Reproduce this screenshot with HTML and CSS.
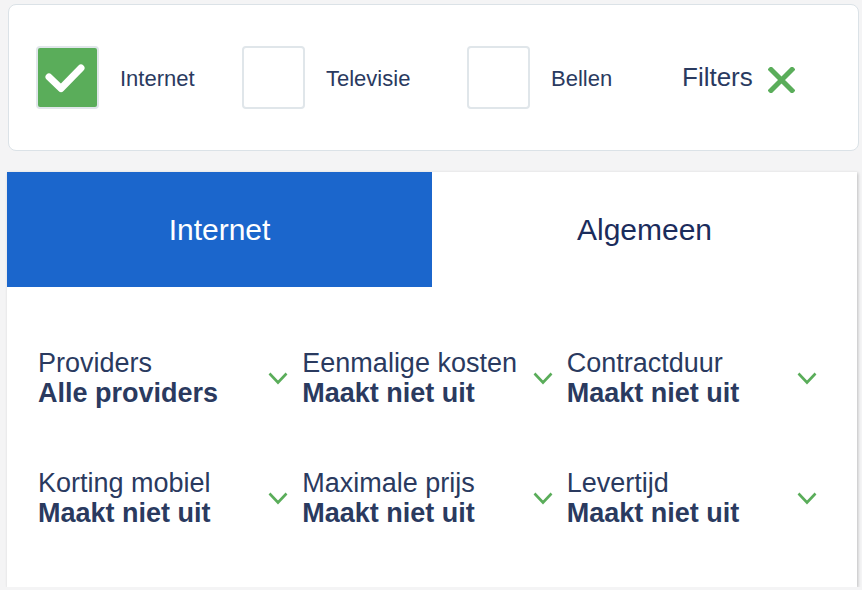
FILE: index.html
```html
<!DOCTYPE html>
<html lang="nl">
<head>
  <meta charset="UTF-8" />
  <meta name="viewport" content="width=device-width, initial-scale=1.0"/>
  <title>Filters</title>
  <link rel="stylesheet" href="styles.css">
</head>
<body>
  <div class="filter-bar">
    <label class="check-item">
      <span class="check-box checked">
        <svg width="63" height="63" viewBox="0 0 63 63"><path d="M13 31 L25 42.5 L45 22" fill="none" stroke="#fff" stroke-width="7" stroke-linecap="round" stroke-linejoin="round"/></svg>
      </span>
      <span class="check-label">Internet</span>
    </label>
    <label class="check-item">
      <span class="check-box"></span>
      <span class="check-label">Televisie</span>
    </label>
    <label class="check-item">
      <span class="check-box"></span>
      <span class="check-label">Bellen</span>
    </label>
    <div class="filters-close">
      <span>Filters</span>
      <svg width="27" height="26" viewBox="0 0 27 26"><path d="M3 2.5 L24 23.5 M24 2.5 L3 23.5" stroke="#5aad5a" stroke-width="5" stroke-linecap="square"/></svg>
    </div>
  </div>

  <div class="panel">
    <div class="tabs">
      <div class="tab active">Internet</div>
      <div class="tab">Algemeen</div>
    </div>
    <div class="options">
      <div class="option">
        <div class="option-text">
          <div class="option-name">Providers</div>
          <div class="option-value">Alle providers</div>
        </div>
        <svg class="chevron" width="20" height="13" viewBox="0 0 20 13"><path d="M1.5 1.5 L10 10.5 L18.5 1.5" fill="none" stroke="#5aad5a" stroke-width="2.6"/></svg>
      </div>
      <div class="option">
        <div class="option-text">
          <div class="option-name">Eenmalige kosten</div>
          <div class="option-value">Maakt niet uit</div>
        </div>
        <svg class="chevron" width="20" height="13" viewBox="0 0 20 13"><path d="M1.5 1.5 L10 10.5 L18.5 1.5" fill="none" stroke="#5aad5a" stroke-width="2.6"/></svg>
      </div>
      <div class="option">
        <div class="option-text">
          <div class="option-name">Contractduur</div>
          <div class="option-value">Maakt niet uit</div>
        </div>
        <svg class="chevron" width="20" height="13" viewBox="0 0 20 13"><path d="M1.5 1.5 L10 10.5 L18.5 1.5" fill="none" stroke="#5aad5a" stroke-width="2.6"/></svg>
      </div>
      <div class="option">
        <div class="option-text">
          <div class="option-name">Korting mobiel</div>
          <div class="option-value">Maakt niet uit</div>
        </div>
        <svg class="chevron" width="20" height="13" viewBox="0 0 20 13"><path d="M1.5 1.5 L10 10.5 L18.5 1.5" fill="none" stroke="#5aad5a" stroke-width="2.6"/></svg>
      </div>
      <div class="option">
        <div class="option-text">
          <div class="option-name">Maximale prijs</div>
          <div class="option-value">Maakt niet uit</div>
        </div>
        <svg class="chevron" width="20" height="13" viewBox="0 0 20 13"><path d="M1.5 1.5 L10 10.5 L18.5 1.5" fill="none" stroke="#5aad5a" stroke-width="2.6"/></svg>
      </div>
      <div class="option">
        <div class="option-text">
          <div class="option-name">Levertijd</div>
          <div class="option-value">Maakt niet uit</div>
        </div>
        <svg class="chevron" width="20" height="13" viewBox="0 0 20 13"><path d="M1.5 1.5 L10 10.5 L18.5 1.5" fill="none" stroke="#5aad5a" stroke-width="2.6"/></svg>
      </div>
    </div>
  </div>
</body>
</html>
```

FILE: styles.css
```css
body {
  font-family: "Liberation Sans", Arial, sans-serif;
  background-color: #f4f4f5;
  color: #2a3a5f;
  margin: 0;
  padding: 4px 5px 0 7px;
}
.filter-bar {
  display: grid;
  grid-template-columns: 206px 225px 215px auto;
  align-items: center;
  height: 145px;
  margin: 0 -2px 0 1px;
  padding-left: 27px;
  background-color: #fff;
  border: 1px solid #dbe2e7;
  border-radius: 8px;
}
.check-item {
  display: flex;
  align-items: center;
}
.check-box {
  width: 59px;
  height: 59px;
  border: 2px solid #e0e6ea;
  border-radius: 4px;
  background-color: #fff;
  position: relative;
}
.check-box.checked {
  background-color: #5aad5a;
}
.check-box svg {
  position: absolute;
  left: -2px;
  top: -2px;
}
.check-label {
  font-size: 22px;
  margin-left: 21px;
  margin-top: 2px;
}
.filters-close {
  display: flex;
  align-items: center;
  font-size: 26px;
}
.filters-close svg {
  margin-left: 15px;
  margin-top: 4px;
}
.panel {
  margin-top: 21px;
  background-color: #fff;
  box-shadow: 1px 1px 3px rgba(0, 0, 0, 0.22);
}
.tabs {
  display: grid;
  grid-template-columns: 1fr 1fr;
  height: 115px;
}
.tab {
  display: flex;
  align-items: center;
  justify-content: center;
  font-size: 30px;
  color: #1b2c5c;
}
.tab.active {
  background-color: #1b66cc;
  color: #fff;
}
.options {
  display: grid;
  grid-template-columns: repeat(3, 1fr);
  row-gap: 60px;
  padding: 61px 26px 59px 31px;
}
.option {
  display: flex;
  align-items: center;
  justify-content: space-between;
  padding-right: 14px;
}
.option-name,
.option-value {
  font-size: 27px;
  line-height: 30px;
  white-space: nowrap;
}
.option-value {
  font-weight: bold;
}
.chevron {
  flex-shrink: 0;
}
```
